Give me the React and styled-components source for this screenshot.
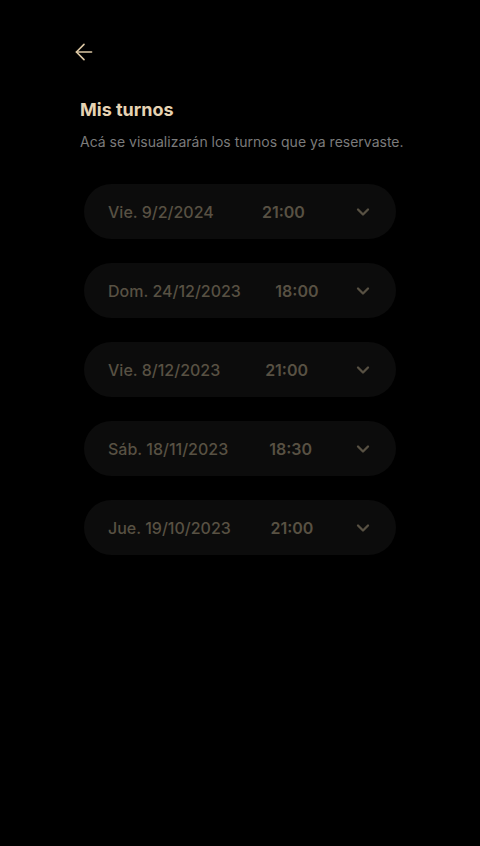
import React from 'react';
import styled, { createGlobalStyle } from 'styled-components';
import { ArrowLeft, ChevronDown } from 'lucide-react';

const GlobalStyle = createGlobalStyle`
  html, body {
    margin: 0;
    padding: 0;
    background: #000;
  }

  body {
    font-family: Inter, "Noto Sans", sans-serif;
    -webkit-font-smoothing: antialiased;
  }
`;

const Page = styled.div`
  min-height: 846px;
  padding: 39px 80px;
  box-sizing: border-box;

  background: #000;
`;

const BackButton = styled.button`
  margin-left: -9px;
  padding: 0;
  width: 26px;
  height: 26px;

  display: flex;
  align-items: center;
  justify-content: center;

  background: none;
  border: none;
  color: #dcc7a4;
  cursor: pointer;
`;

const Title = styled.h1`
  margin: 33px 0 0;

  font-size: 18px;
  line-height: 24px;
  font-weight: 700;
  color: #e6d3b3;
`;

const Subtitle = styled.p`
  margin: 10px 0 0;

  font-size: 14px;
  line-height: 20px;
  color: #7b7b7b;
  white-space: nowrap;
`;

const List = styled.div`
  margin-top: 32px;
  padding: 0 4px;

  display: flex;
  flex-direction: column;
  gap: 24px;
`;

const Card = styled.div`
  height: 55px;
  padding: 0 23px 0 24px;
  box-sizing: border-box;

  display: flex;
  align-items: center;
  justify-content: space-between;

  background: #0c0c0c;
  border-radius: 28px;

  color: #585143;
  font-size: 16px;
`;

const DateText = styled.span`
  font-weight: 500;
`;

const TimeText = styled.span`
  font-weight: 600;
`;

const Toggle = styled.span`
  display: flex;
  color: #585143;
`;

const turnos = [
  { date: 'Vie. 9/2/2024', time: '21:00' },
  { date: 'Dom. 24/12/2023', time: '18:00' },
  { date: 'Vie. 8/12/2023', time: '21:00' },
  { date: 'Sáb. 18/11/2023', time: '18:30' },
  { date: 'Jue. 19/10/2023', time: '21:00' },
];

export default function App() {
  return (
    <>
      <GlobalStyle />
      <Page>
        <BackButton aria-label='Volver'>
          <ArrowLeft size={26} strokeWidth={1.5} />
        </BackButton>
        <Title>Mis turnos</Title>
        <Subtitle>Acá se visualizarán los turnos que ya reservaste.</Subtitle>
        <List>
          {turnos.map(t => (
            <Card key={t.date}>
              <DateText>{t.date}</DateText>
              <TimeText>{t.time}</TimeText>
              <Toggle>
                <ChevronDown size={20} strokeWidth={2.75} />
              </Toggle>
            </Card>
          ))}
        </List>
      </Page>
    </>
  );
}
